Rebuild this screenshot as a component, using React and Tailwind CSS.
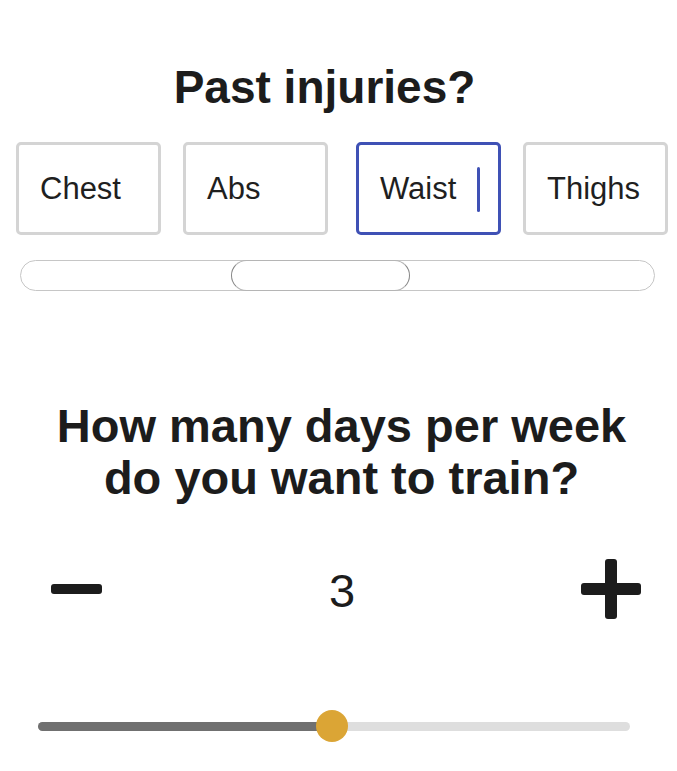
import React from "react";

const font = { fontFamily: '"Liberation Sans", Arial, sans-serif' };

function Box({ label, active, ml }) {
  return (
    <div
      className={`relative flex h-[93px] w-[145px] shrink-0 items-center rounded-[5px] border-[3px] bg-white pl-[21px] text-[31px] text-[#1f1f1f] ${ml} ${
        active ? "border-[#3f51b5]" : "border-[#d4d4d4]"
      }`}
    >
      <span className="leading-none">{label}</span>
      {active && (
        <span className="absolute left-[118px] top-[22px] h-[45px] w-[3px] rounded-full bg-[#3f51b5]" />
      )}
    </div>
  );
}

export default function App() {
  return (
    <div
      style={font}
      className="h-[771px] w-[677px] overflow-hidden bg-white text-[#1c1c1c]"
    >
      <h1 className="pr-[28px] pt-[61px] text-center text-[46px] font-bold leading-[52px]">
        Past injuries?
      </h1>

      <div className="mt-[29px] flex">
        <Box label="Chest" ml="ml-[16px]" />
        <Box label="Abs" ml="ml-[22px]" />
        <Box label="Waist" ml="ml-[28px]" active />
        <Box label="Thighs" ml="ml-[22px]" />
      </div>

      <div className="relative ml-[20px] mt-[25px] h-[31px] w-[635px] rounded-full border border-[#c6c6c6]">
        <div className="absolute left-[210px] top-[-1px] h-[31px] w-[179px] rounded-full border-[1.5px] border-[#858585] border-y-[#b5b5b5]" />
      </div>

      <h2 className="mt-[109px] pl-[6px] text-center text-[47px] font-bold leading-[52px]">
        How many days per week
        <br />
        do you want to train?
      </h2>

      <div className="mt-[55px] flex h-[60px] items-center">
        <div className="ml-[51px] h-[10px] w-[51px] rounded-[3px] bg-[#1c1c1c]" />
        <span className="ml-[227px] pt-[3px] text-[47px] leading-[60px]">3</span>
        <div className="relative ml-[226px] h-[60px] w-[60px]">
          <div className="absolute left-0 top-[24px] h-[12px] w-[60px] rounded-[3px] bg-[#1c1c1c]" />
          <div className="absolute left-[24px] top-0 h-[60px] w-[12px] rounded-[3px] bg-[#1c1c1c]" />
        </div>
      </div>

      <div className="relative ml-[38px] mt-[91px] flex h-[32px] w-[592px] items-center">
        <div className="flex h-[9px] w-full overflow-hidden rounded-full bg-[#dedede]">
          <div className="h-full w-[294px] bg-[#707070]" />
        </div>
        <div className="absolute left-[278px] top-0 h-[32px] w-[32px] rounded-full bg-[#dba535]" />
      </div>
    </div>
  );
}
